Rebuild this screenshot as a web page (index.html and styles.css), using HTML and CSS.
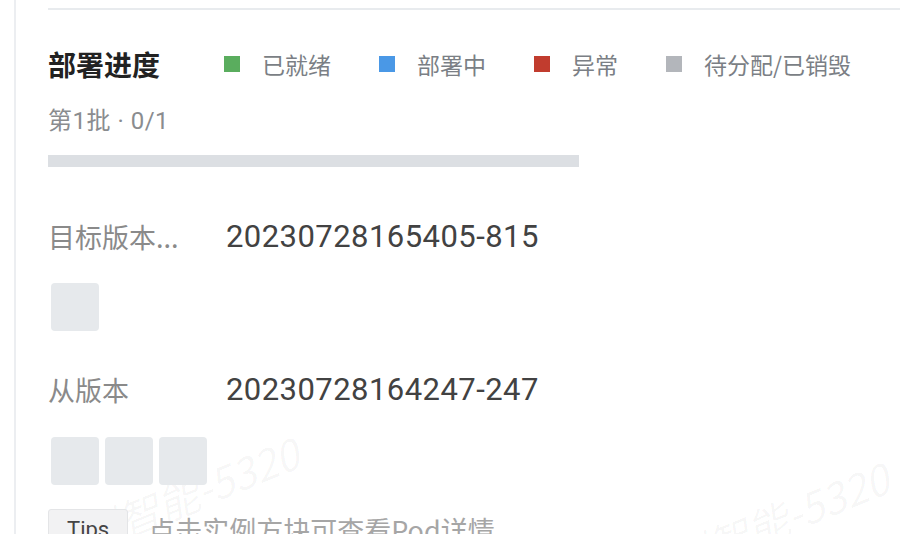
FILE: index.html
```html
<!DOCTYPE html>
<html lang="zh-CN">
<head>
<meta charset="utf-8">
<title>部署进度</title>
<link rel="stylesheet" href="styles.css">
</head>
<body>
<div class="page">
  <div class="watermarks" aria-hidden="true">
    <span class="wm wm-1">全型智能-5320</span>
    <span class="wm wm-2">全型智能-5320</span>
  </div>
  <section class="section">
    <div class="header">
      <h2 class="title">部署进度</h2>
      <ul class="legend">
        <li class="legend-item"><span class="dot dot-ready"></span>已就绪</li>
        <li class="legend-item"><span class="dot dot-deploying"></span>部署中</li>
        <li class="legend-item"><span class="dot dot-error"></span>异常</li>
        <li class="legend-item"><span class="dot dot-idle"></span>待分配/已销毁</li>
      </ul>
    </div>
    <div class="batch">第1批 · 0/1</div>
    <div class="bar"><div class="bar-fill" style="width:0%"></div></div>

    <div class="row row-first">
      <div class="label">目标版本...</div>
      <div class="value">20230728165405-815</div>
    </div>
    <div class="boxes boxes-first">
      <span class="box"></span>
    </div>

    <div class="row row-second">
      <div class="label">从版本</div>
      <div class="value">20230728164247-247</div>
    </div>
    <div class="boxes boxes-second">
      <span class="box"></span>
      <span class="box"></span>
      <span class="box"></span>
    </div>

    <div class="tips">
      <span class="tag">Tips</span>
      <span class="tips-text">点击实例方块可查看Pod详情</span>
    </div>
  </section>
</div>
</body>
</html>
```

FILE: styles.css
```css
html, body {
  margin: 0;
  padding: 0;
  background: #ffffff;
  overflow: hidden;
}

body {
  font-family: "Noto Sans CJK SC", "Noto Sans", sans-serif;
  color: #333;
}

.page {
  position: relative;
  margin-left: 14px;
  border-left: 2px solid #eceef1;
  height: 534px;
  padding-left: 32px;
  padding-top: 8px;
  box-sizing: border-box;
  overflow: hidden;
}

.watermarks {
  position: absolute;
  inset: 0;
  pointer-events: none;
  z-index: 0;
}

.wm {
  position: absolute;
  font-family: "Noto Sans CJK SC", sans-serif;
  font-style: italic;
  font-size: 42px;
  color: rgba(0, 0, 0, 0.035);
  white-space: nowrap;
  transform: rotate(-22deg);
  transform-origin: left bottom;
}

.wm-1 {
  left: 36px;
  top: 520px;
}

.wm-2 {
  left: 626px;
  top: 545px;
}

.section {
  position: relative;
  z-index: 1;
  border-top: 2px solid #e8ebee;
}

.header {
  display: flex;
  align-items: center;
  margin-top: 34px;
  height: 40px;
}

.title {
  margin: 0;
  font-size: 28px;
  line-height: 40px;
  font-weight: 600;
  color: #222;
}

.legend {
  display: flex;
  align-items: center;
  list-style: none;
  margin: 0 0 0 64px;
  padding: 0;
  gap: 48px;
}

.legend-item {
  display: flex;
  align-items: center;
  font-size: 23px;
  line-height: 32px;
  color: #7b7f85;
}

.dot {
  width: 16px;
  height: 16px;
  margin-right: 22px;
}

.dot-ready { background: #5aad5e; }
.dot-deploying { background: #4a98e6; }
.dot-error { background: #c13c2e; }
.dot-idle { background: #b3b6bb; }

.batch {
  margin-top: 21px;
  font-family: Roboto, "Noto Sans CJK SC", sans-serif;
  font-size: 24px;
  letter-spacing: 0.5px;
  line-height: 32px;
  color: #8a8c8f;
}

.bar {
  margin-top: 18px;
  width: 531px;
  height: 12px;
  background: #dcdfe3;
}

.bar-fill {
  height: 100%;
  background: #5aad5e;
}

.row {
  display: flex;
  align-items: center;
  line-height: 36px;
}

.row-first { margin-top: 52px; }
.row-second { margin-top: 38px; }

.label {
  width: 178px;
  flex: none;
  font-size: 27px;
  color: #8a8a8a;
  white-space: nowrap;
}

.value {
  font-family: Roboto, "Noto Sans CJK SC", sans-serif;
  font-size: 31px;
  letter-spacing: 0.45px;
  color: #424242;
}

.boxes {
  display: flex;
}

.boxes-first { margin-top: 25px; }
.boxes-second { margin-top: 26px; }

.box {
  width: 48px;
  height: 48px;
  margin: 3px;
  border-radius: 4px;
  background: #e6e9ec;
}

.tips {
  display: flex;
  align-items: center;
  margin-top: 20px;
}

.tag {
  display: inline-block;
  height: 40px;
  padding: 0 18px;
  line-height: 40px;
  box-sizing: border-box;
  font-family: Roboto, sans-serif;
  font-size: 22px;
  color: #444;
  background: #f2f2f3;
  border: 1px solid #e4e5e7;
  border-radius: 3px;
}

.tips-text {
  margin-left: 20px;
  font-size: 27px;
  line-height: 40px;
  color: #a6a6a6;
  padding-top: 2px;
}
```
